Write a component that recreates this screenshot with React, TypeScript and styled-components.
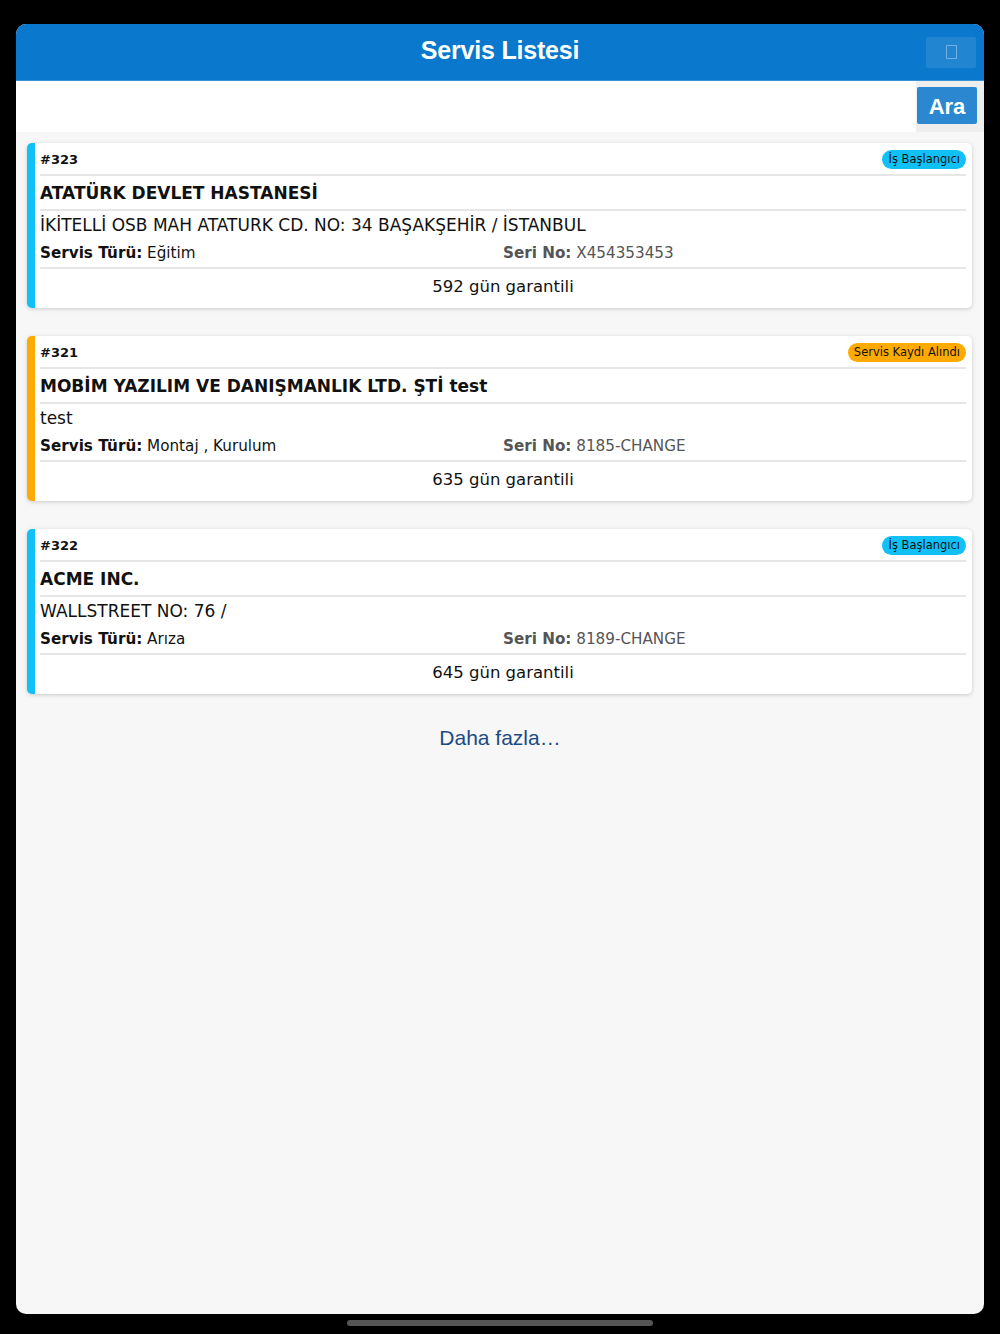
import React from 'react';
import styled, { createGlobalStyle } from 'styled-components';

const GlobalStyle = createGlobalStyle`
  html, body {
    margin: 0;
    padding: 0;
    background: #000;
  }
  body {
    font-family: "DejaVu Sans", Verdana, sans-serif;
  }
`;

const Screen = styled.div`
  width: 1000px;
  height: 1334px;
  background: #000;
  display: flex;
  flex-direction: column;
  align-items: center;
`;

const Window = styled.div`
  margin-top: 24px;
  width: 968px;
  height: 1290px;
  border-radius: 10px;
  overflow: hidden;
  background: #f7f7f7;
  display: flex;
  flex-direction: column;
`;

const Header = styled.header`
  height: 56px;
  background: #0a78cc;
  display: grid;
  grid-template-columns: 1fr auto 1fr;
  align-items: center;
`;

const Title = styled.h1`
  grid-column: 2;
  margin: 0 0 3px;
  color: #fff;
  font-family: "Liberation Sans", Arial, sans-serif;
  font-weight: 700;
  font-size: 25px;
  letter-spacing: -0.2px;
`;

const MenuButton = styled.button`
  grid-column: 3;
  justify-self: end;
  margin-right: 8px;
  width: 50px;
  height: 31px;
  border: 0;
  border-radius: 2px;
  background: rgba(255, 255, 255, 0.1);
  display: flex;
  align-items: center;
  justify-content: center;
  padding: 0;
`;

const Tofu = styled.span`
  width: 9px;
  height: 12px;
  border: 1px solid rgba(255, 255, 255, 0.35);
`;

const SearchBar = styled.div`
  height: 51px;
  display: flex;
  border-top: 1px solid #3a92d6;
`;

const SearchInput = styled.div`
  flex: 1;
  background: #fff;
`;

const SearchSide = styled.div`
  width: 68px;
  background: #eeeeee;
  padding: 6px 0 0 1px;
  box-sizing: border-box;
`;

const SearchButton = styled.button`
  width: 60px;
  height: 37px;
  border: 0;
  border-radius: 2px;
  background: #2b88d0;
  color: #fff;
  font-family: "Liberation Sans", Arial, sans-serif;
  font-weight: 700;
  font-size: 22px;
  padding: 2px 0 0;
`;

const List = styled.div`
  display: flex;
  flex-direction: column;
  gap: 28px;
  padding: 11px 12px 0 11px;
`;

const Card = styled.div<{ $accent: string }>`
  background: #fff;
  border-left: 8px solid ${(p) => p.$accent};
  border-radius: 5px;
  box-shadow: 0 1px 4px rgba(0, 0, 0, 0.18);
  padding: 0 6px 0 5px;
  display: flex;
  flex-direction: column;
  color: #111;
`;

const Row = styled.div<{ $h: number; $line?: boolean; $lift?: number }>`
  box-sizing: border-box;
  height: ${(p) => p.$h}px;
  padding-bottom: ${(p) => Math.max(p.$lift ?? 0, 0)}px;
  padding-top: ${(p) => Math.max(-(p.$lift ?? 0), 0)}px;
  display: flex;
  align-items: center;
  border-bottom: ${(p) => (p.$line ? '2px solid #e6e6e6' : '0')};
`;

const Id = styled.span`
  flex: 1;
  font-weight: 700;
  font-size: 13px;
`;

const Badge = styled.span<{ $bg: string }>`
  background: ${(p) => p.$bg};
  border-radius: 10px;
  font-size: 11.5px;
  line-height: 19px;
  padding: 0 6px;
  color: #111;
`;

const Name = styled.span`
  font-weight: 700;
  font-size: 17px;
`;

const Address = styled.span`
  font-size: 17px;
`;

const Half = styled.span<{ $muted?: boolean }>`
  flex: 1;
  font-size: 15.2px;
  color: ${(p) => (p.$muted ? '#555' : '#111')};
`;

const Label = styled.b`
  font-weight: 700;
`;

const Warranty = styled.span`
  flex: 1;
  text-align: center;
  font-size: 16.5px;
`;

const More = styled.div`
  margin-top: 32px;
  text-align: center;
  font-family: "Liberation Sans", Arial, sans-serif;
  font-size: 21px;
  color: #1c4b84;
`;

const HomeBar = styled.div`
  margin-top: 6px;
  width: 306px;
  height: 6px;
  border-radius: 3px;
  background: #555;
`;

type Service = {
  id: number;
  status: string;
  statusColor: string;
  name: string;
  address: string;
  type: string;
  serial: string;
  days: number;
};

const services: Service[] = [
  {
    id: 323,
    status: 'İş Başlangıcı',
    statusColor: '#12c0f8',
    name: 'ATATÜRK DEVLET HASTANESİ',
    address: 'İKİTELLİ OSB MAH ATATURK CD. NO: 34 BAŞAKŞEHİR / İSTANBUL',
    type: 'Eğitim',
    serial: 'X454353453',
    days: 592,
  },
  {
    id: 321,
    status: 'Servis Kaydı Alındı',
    statusColor: '#ffaa00',
    name: 'MOBİM YAZILIM VE DANIŞMANLIK LTD. ŞTİ test',
    address: 'test',
    type: 'Montaj , Kurulum',
    serial: '8185-CHANGE',
    days: 635,
  },
  {
    id: 322,
    status: 'İş Başlangıcı',
    statusColor: '#12c0f8',
    name: 'ACME INC.',
    address: 'WALLSTREET NO: 76 /',
    type: 'Arıza',
    serial: '8189-CHANGE',
    days: 645,
  },
];

export default function App() {
  return (
    <Screen>
      <GlobalStyle />
      <Window>
        <Header>
          <Title>Servis Listesi</Title>
          <MenuButton>
            <Tofu />
          </MenuButton>
        </Header>
        <SearchBar>
          <SearchInput />
          <SearchSide>
            <SearchButton>Ara</SearchButton>
          </SearchSide>
        </SearchBar>
        <List>
          {services.map((s) => (
            <Card key={s.id} $accent={s.statusColor}>
              <Row $h={33} $line $lift={-2}>
                <Id>#{s.id}</Id>
                <Badge $bg={s.statusColor}>{s.status}</Badge>
              </Row>
              <Row $h={35} $line $lift={-1}>
                <Name>{s.name}</Name>
              </Row>
              <Row $h={28} $lift={1}>
                <Address>{s.address}</Address>
              </Row>
              <Row $h={30} $line $lift={1}>
                <Half>
                  <Label>Servis Türü:</Label> {s.type}
                </Half>
                <Half $muted>
                  <Label>Seri No:</Label> {s.serial}
                </Half>
              </Row>
              <Row $h={39} $lift={4}>
                <Warranty>{s.days} gün garantili</Warranty>
              </Row>
            </Card>
          ))}
        </List>
        <More>Daha fazla…</More>
      </Window>
      <HomeBar />
    </Screen>
  );
}
